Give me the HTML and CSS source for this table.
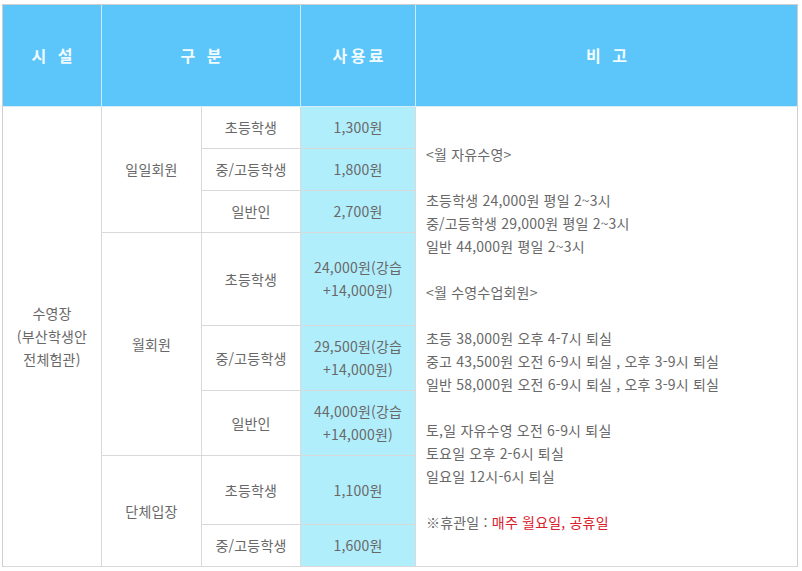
FILE: index.html
```html
<!DOCTYPE html>
<html lang="ko">
<head>
<meta charset="utf-8">
<title>수영장 사용료</title>
<link rel="stylesheet" href="styles.css">
</head>
<body>
<div class="fee-table">
  <div class="cell head">시 설</div>
  <div class="cell head c2">구 분</div>
  <div class="cell head">사용료</div>
  <div class="cell head">비 고</div>

  <div class="cell r8">수영장<br>(부산학생안<br>전체험관)</div>
  <div class="cell r3">일일회원</div>
  <div class="cell">초등학생</div>
  <div class="cell price">1,300원</div>
  <div class="cell r8 note">
    <p>&lt;월 자유수영&gt;</p>
    <p>&nbsp;</p>
    <p>초등학생 24,000원 평일 2~3시</p>
    <p>중/고등학생 29,000원 평일 2~3시</p>
    <p>일반 44,000원 평일 2~3시</p>
    <p>&nbsp;</p>
    <p>&lt;월 수영수업회원&gt;</p>
    <p>&nbsp;</p>
    <p>초등 38,000원 오후 4-7시 퇴실</p>
    <p>중고 43,500원 오전 6-9시 퇴실 , 오후 3-9시 퇴실</p>
    <p>일반 58,000원 오전 6-9시 퇴실 , 오후 3-9시 퇴실</p>
    <p>&nbsp;</p>
    <p>토,일 자유수영 오전 6-9시 퇴실</p>
    <p>토요일 오후 2-6시 퇴실</p>
    <p>일요일 12시-6시 퇴실</p>
    <p>&nbsp;</p>
    <p>※휴관일 : <span class="red">매주 월요일, 공휴일</span></p>
  </div>
  <div class="cell">중/고등학생</div>
  <div class="cell price">1,800원</div>
  <div class="cell">일반인</div>
  <div class="cell price">2,700원</div>

  <div class="cell r3">월회원</div>
  <div class="cell">초등학생</div>
  <div class="cell price">24,000원(강습<br>+14,000원)</div>
  <div class="cell">중/고등학생</div>
  <div class="cell price">29,500원(강습<br>+14,000원)</div>
  <div class="cell">일반인</div>
  <div class="cell price">44,000원(강습<br>+14,000원)</div>

  <div class="cell r2">단체입장</div>
  <div class="cell">초등학생</div>
  <div class="cell price">1,100원</div>
  <div class="cell">중/고등학생</div>
  <div class="cell price">1,600원</div>
</div>
</body>
</html>
```
FILE: styles.css
```css
html, body {
  margin: 0;
  padding: 0;
  background: #ffffff;
}

body {
  padding: 4px 0 0 2px;
  font-family: "Noto Sans CJK KR", "Noto Sans", sans-serif;
  font-size: 14px;
  color: #686868;
  letter-spacing: 0.2px;
}

.fee-table {
  display: grid;
  grid-template-columns: 99px 100px 99px 115px 382px;
  grid-template-rows: 102px 42px 42px 42px 93px 65px 65px 69px 42px;
  width: 796px;
  box-sizing: border-box;
  border-top: 1px solid #cfcfcf;
  border-left: 1px solid #cfcfcf;
}

.cell {
  box-sizing: border-box;
  border-right: 1px solid #d9d9d9;
  border-bottom: 1px solid #d9d9d9;
  display: flex;
  align-items: center;
  justify-content: center;
  text-align: center;
  line-height: 23px;
}

.head {
  background: #5cc6fb;
  color: #f2fbff;
  font-size: 16px;
  font-weight: bold;
  letter-spacing: 3.5px;
  text-indent: 3.5px;
  border-right-color: #cdeaf8;
  border-bottom-color: #d4eef9;
}

.head:nth-child(4) {
  border-right-color: #cfcfcf;
}

.c2 { grid-column: span 2; }
.r8 { grid-row: span 8; }
.r3 { grid-row: span 3; }
.r2 { grid-row: span 2; }

.price {
  background: #b1eefc;
}

.note {
  display: block;
  text-align: left;
  padding: 36px 10px 0 10px;
  border-right-color: #cfcfcf;
}

.note p {
  margin: 0;
  line-height: 23px;
}

.red {
  color: #d9212d;
}
```
